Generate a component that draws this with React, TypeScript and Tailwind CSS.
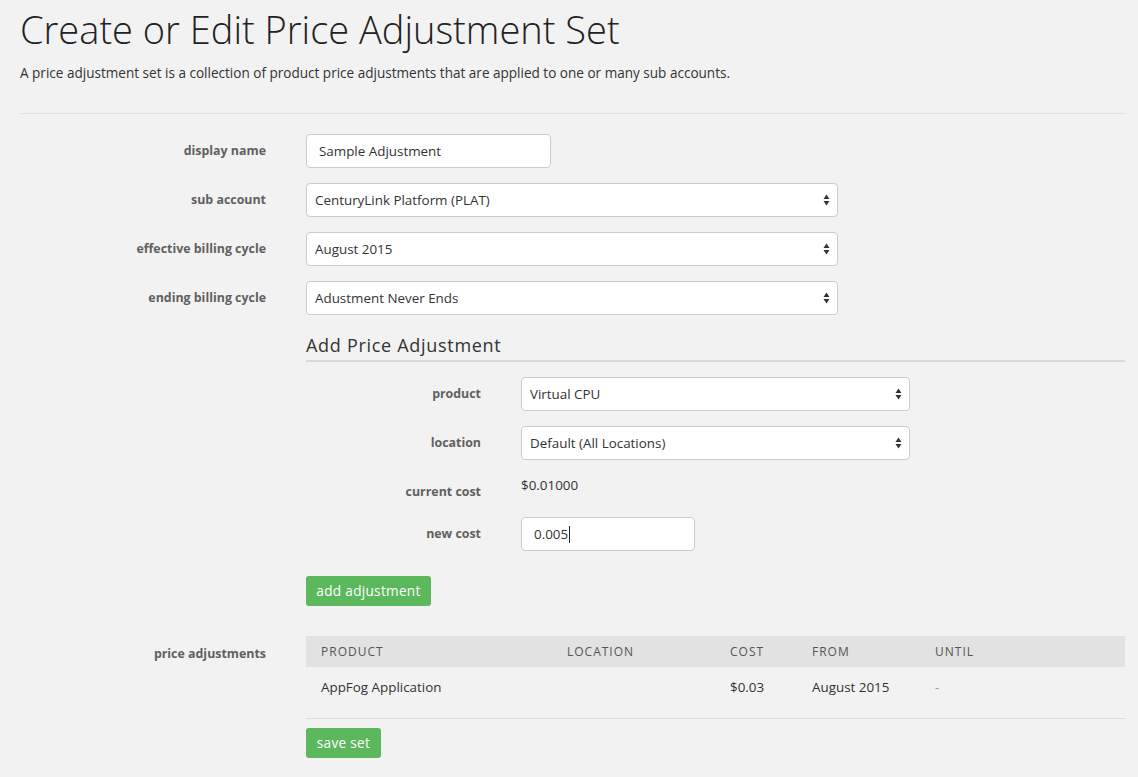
import React from "react";

const Arrows = () => (
  <svg
    width="7"
    height="12"
    viewBox="0 0 7 12"
    className="absolute right-[7px] top-1/2 -translate-y-1/2"
  >
    <path d="M3.5 0.5 L6.5 5 H0.5 Z" fill="#333" />
    <path d="M3.5 11.5 L6.5 7 H0.5 Z" fill="#333" />
  </svg>
);

const Select = ({ value, w }: { value: string; w: string }) => (
  <div
    className={`relative flex h-[34px] items-center rounded-[4px] border border-[#cccccc] bg-white pl-[8px] text-[13.4px] text-[#333] ${w}`}
  >
    {value}
    <Arrows />
  </div>
);

const Label = ({ children, w }: { children: React.ReactNode; w: string }) => (
  <div className={`shrink-0 text-right text-[12.4px] font-bold text-[#606060] ${w}`}>{children}</div>
);

export default function App() {
  return (
    <div
      className="min-h-[777px] bg-[#f2f2f2] pl-[20px] pr-[13px] text-[#333]"
      style={{ fontFamily: '"Open Sans", "Noto Sans", sans-serif' }}
    >
      <h1 className="pt-[8px] text-[38px] font-light leading-[42px] text-[#222]">
        Create or Edit Price Adjustment Set
      </h1>
      <p className="mt-[13px] text-[13.55px] leading-[20px] text-[#333]">
        A price adjustment set is a collection of product price adjustments that are applied to one or many sub accounts.
      </p>
      <div className="mt-[30px] h-px bg-[#e1e1e1]" />

      <div className="mt-[20px] flex flex-col gap-[15px]">
        <div className="flex items-center gap-[40px]">
          <Label w="w-[246px]">display name</Label>
          <div className="flex h-[34px] w-[245px] items-center rounded-[4px] border border-[#cccccc] bg-white pl-[12px] text-[13.4px]">
            Sample Adjustment
          </div>
        </div>
        <div className="flex items-center gap-[40px]">
          <Label w="w-[246px]">sub account</Label>
          <Select value="CenturyLink Platform (PLAT)" w="w-[532px]" />
        </div>
        <div className="flex items-center gap-[40px]">
          <Label w="w-[246px]">effective billing cycle</Label>
          <Select value="August 2015" w="w-[532px]" />
        </div>
        <div className="flex items-center gap-[40px]">
          <Label w="w-[246px]">ending billing cycle</Label>
          <Select value="Adustment Never Ends" w="w-[532px]" />
        </div>
      </div>

      <div className="ml-[286px]">
        <h2 className="mt-[18px] border-b-2 border-[#d9d9d9] pb-[3px] text-[18px] leading-[24px] tracking-[0.7px] text-[#333]">
          Add Price Adjustment
        </h2>
        <div className="mt-[15px] flex flex-col">
          <div className="flex items-center gap-[40px]">
            <Label w="w-[175px]">product</Label>
            <Select value="Virtual CPU" w="w-[389px]" />
          </div>
          <div className="mt-[15px] flex items-center gap-[40px]">
            <Label w="w-[175px]">location</Label>
            <Select value="Default (All Locations)" w="w-[389px]" />
          </div>
          <div className="mt-[15px] flex h-[27px] gap-[40px]">
            <div className="w-[175px] pt-[7px] text-right text-[12.4px] font-bold leading-[20px] text-[#606060]">
              current cost
            </div>
            <div className="text-[13.4px] leading-[20px] text-[#333]">$0.01000</div>
          </div>
          <div className="mt-[15px] flex items-center gap-[40px]">
            <Label w="w-[175px]">new cost</Label>
            <div className="flex h-[34px] w-[174px] items-center rounded-[4px] border border-[#cccccc] bg-white pl-[12px] text-[13.4px]">
              0.005
              <span className="ml-px inline-block h-[17px] w-px bg-[#222]" />
            </div>
          </div>
        </div>
        <button className="mt-[25px] h-[30px] w-[125px] rounded-[3px] bg-[#5cb85c] text-center text-[13.6px] tracking-[0.3px] text-white">
          add adjustment
        </button>
      </div>

      <div className="mt-[30px] flex gap-[40px]">
        <Label w="w-[246px] pt-[8px] leading-[20px]">price adjustments</Label>
        <div className="flex-1">
          <div className="grid h-[31px] grid-cols-[246px_163px_82px_123px_1fr] items-center bg-[#e2e2e2] text-[12px] uppercase tracking-[1px] text-[#555]">
            <div className="pl-[15px]">Product</div>
            <div className="pl-[15px]">Location</div>
            <div className="pl-[15px]">Cost</div>
            <div className="pl-[15px]">From</div>
            <div className="pl-[15px]">Until</div>
          </div>
          <div className="grid h-[52px] grid-cols-[246px_163px_82px_123px_1fr] items-start border-b border-[#dddddd] pt-[10px] text-[13.4px] leading-[20px] text-[#333]">
            <div className="pl-[15px]">AppFog Application</div>
            <div className="pl-[15px]"></div>
            <div className="pl-[15px]">$0.03</div>
            <div className="pl-[15px]">August 2015</div>
            <div className="pl-[15px] text-[#999]">-</div>
          </div>
          <button className="mt-[9px] h-[30px] w-[75px] rounded-[3px] bg-[#5cb85c] text-center text-[13.6px] tracking-[0.3px] text-white">
            save set
          </button>
        </div>
      </div>
    </div>
  );
}
